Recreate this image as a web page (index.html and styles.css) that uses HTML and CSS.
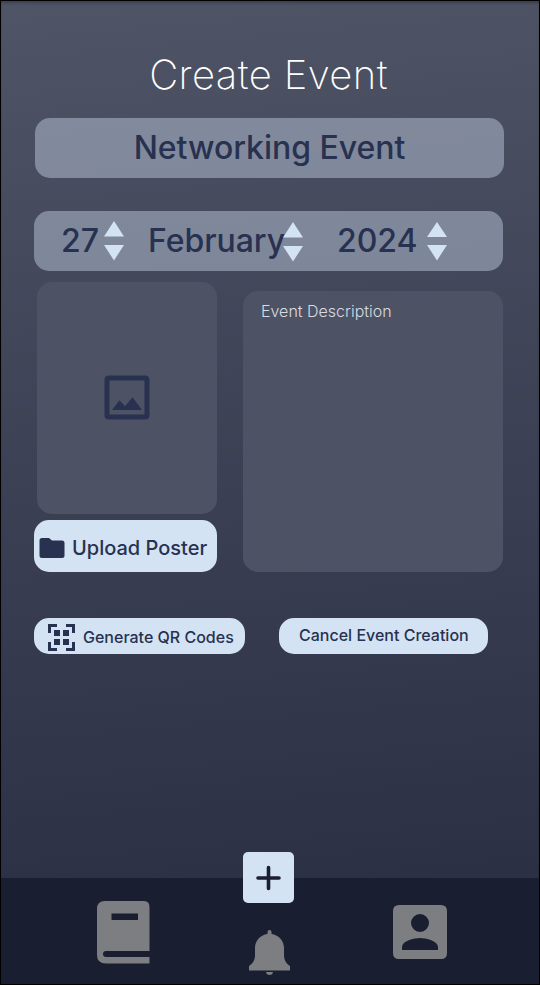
FILE: index.html
```html
<!DOCTYPE html>
<html lang="en">
<head>
<meta charset="utf-8">
<title>Create Event</title>
<link rel="stylesheet" href="styles.css">
</head>
<body>
<div class="screen">
  <main class="content">
    <h1 class="title">Create Event</h1>
    <div class="field name-field"><span>Networking Event</span></div>
    <div class="field date-field">
      <span class="day">27</span>
      <svg class="stepper" width="20" height="40" viewBox="0 0 20 40"><path d="M10 0L20 15.500H0zM0 24H20L10 39.500z"/></svg>
      <span class="month">February</span>
      <svg class="stepper month-stepper" width="20" height="40" viewBox="0 0 20 40"><path d="M10 0L20 15.500H0zM0 24H20L10 39.500z"/></svg>
      <span class="year">2024</span>
      <svg class="stepper year-stepper" width="20" height="40" viewBox="0 0 20 40"><path d="M10 1L20 16H0zM0 24H20L10 39.500z"/></svg>
    </div>
    <div class="details">
      <div class="poster-column">
        <div class="poster">
          <svg width="46" height="45" viewBox="0 0 46 45"><path fill-rule="evenodd" d="M5 .5H41Q45.500 .5 45.500 5V40Q45.500 44.500 41 44.500H5Q.5 44.500 .5 40V5Q.5 .5 5 .5zM5.500 5.500V39.500H40.500V5.500zM8 35L15.500 25.300L21 31.300L28.500 22.300L38 35z"/></svg>
        </div>
        <button class="button upload">
          <svg width="26" height="20" viewBox="0 0 26 20"><path d="M3 0H10L13 2.500H23Q25.500 2.500 25.500 5V17.500Q25.500 20 23 20H3Q.5 20 .5 17.500V2.500Q.5 0 3 0z"/></svg>
          <span>Upload Poster</span>
        </button>
      </div>
      <div class="description">Event Description</div>
    </div>
    <div class="actions">
      <button class="button generate">
        <svg width="27" height="27" viewBox="0 0 27 27"><path d="M0 0H9V3H3V9H0zM18 0H27V9H24V3H18zM0 18H3V24H9V27H0zM24 18H27V27H18V24H24zM6 6H12V12H6zM15 6H21V12H15zM6 15H12V21H6zM15 15H21V21H15z"/></svg>
        <span>Generate QR Codes</span>
      </button>
      <button class="button cancel"><span>Cancel Event Creation</span></button>
    </div>
  </main>
  <nav class="tabs">
    <svg class="book" width="53" height="63" viewBox="0 0 53 63"><path fill-rule="evenodd" d="M8 0H47Q52.500 0 52.500 6V50H9Q6 50 6 53T9 56H52.500V62.500H9Q0 62.500 0 54V8Q0 0 8 0zM14.500 12.500V19H41V12.500z"/></svg>
    <div class="center">
      <button class="add" aria-label="Add">
        <svg width="25" height="26" viewBox="0 0 25 26"><path d="M12.500 2.500V23.500M2 13H23"/></svg>
      </button>
      <svg class="bell" width="41" height="46" viewBox="0 0 41 46"><path d="M18.500 4V2Q18.500 0 20.500 0T22.500 2V4C30 5 35 11 35 18V25C35 31 38 34 41 36V40.500H0V36C3 34 6 31 6 25V18C6 11 11 5 18.500 4zM17 42H24Q23.500 45 20.500 45T17 42z"/></svg>
    </div>
    <svg class="profile" width="54" height="54" viewBox="0 0 54 54"><path fill-rule="evenodd" d="M6 0H48Q54 0 54 6V48Q54 54 48 54H6Q0 54 0 48V6Q0 0 6 0zM27 9A9 9 0 0 0 27 27A9 9 0 0 0 27 9zM9 45H45V42C45 36 33 33 27 33S9 36 9 42z"/></svg>
  </nav>
</div>
</body>
</html>
```
FILE: styles.css
```css
* { box-sizing: border-box; }
body { margin: 0; font-family: Inter, "Liberation Sans", sans-serif; color: #283150; }
svg { display: block; flex: none; fill: #283150; }
.screen {
  display: flex; flex-direction: column; width: 540px; height: 985px;
  border: 1px solid #000; overflow: hidden;
  background: linear-gradient(175deg, #4f5466 0%, #44495c 26%, #353a4e 63%, #2a2f43 92%);
  box-shadow: inset 0 3px 3px -1px rgba(0, 0, 0, .25);
}
.content { flex: 1; padding: 50px 35px 0 33px; }
.title {
  margin: 0 1px 0 0; height: 48px; line-height: 48px; text-align: center; color: #fff;
  font-size: 40px; font-weight: 200; letter-spacing: .4px;
}
.field {
  display: flex; align-items: center; width: 469px; height: 60px; border-radius: 15px;
  background: rgba(185, 197, 216, .5); font-size: 32px; font-weight: 500; letter-spacing: -.04px; white-space: nowrap;
}
.field span { padding-bottom: 2px; }
.name-field { margin: 19px 0 0 1px; justify-content: center; }
.date-field { margin-top: 33px; padding-left: 27px; }
.day { width: 43px; }
.stepper { fill: #d3e3f3; }
.month { width: 135px; margin-left: 24px; }
.month-stepper { margin-top: 2px; }
.year { width: 90px; margin-left: 34px; }
.details { display: flex; justify-content: space-between; height: 301px; }
.poster-column { width: 183px; padding-top: 11px; }
.poster {
  display: flex; align-items: center; justify-content: center; padding-bottom: 2px;
  width: 180px; height: 232px; margin: 0 0 6px 3px; border-radius: 15px; background: #4d5265;
}
.button {
  display: flex; align-items: center; border: 0; border-radius: 15px; padding: 0;
  background: #d3e3f3; color: #283150; font: 500 16px Inter, "Liberation Sans", sans-serif; white-space: nowrap;
}
.upload { width: 183px; height: 52px; padding: 4px 0 0 5px; gap: 7px; font-size: 20px; }
.description {
  width: 260px; height: 281px; margin: 20px 1px 0 0; padding: 10px 18px;
  border-radius: 15px; background: #4d5265; color: #d9dbe1; font-size: 16px; line-height: 20px; font-weight: 300;
}
.actions { display: flex; gap: 34px; margin-top: 46px; }
.generate { width: 211px; height: 36px; padding: 3px 0 0 14px; gap: 8px; }
.generate span, .cancel span { padding-bottom: 2px; }
.cancel { width: 209px; height: 36px; padding-left: 20px; }
.tabs { display: flex; height: 106px; padding-left: 96px; background: #1a1e31; }
.book, .bell, .profile { fill: #7d7e82; }
.book { margin-top: 23px; }
.center { width: 51px; margin: -26px 0 0 93px; }
.add {
  display: flex; align-items: center; justify-content: center; width: 51px; height: 51px;
  padding: 0; border: 0; border-radius: 5px; background: #d3e3f3;
}
.add svg { fill: none; stroke: #1a1e31; stroke-width: 3.6; stroke-linecap: round; }
.bell { margin: 27px 0 0 6px; }
.profile { margin: 27px 0 0 99px; }
```
